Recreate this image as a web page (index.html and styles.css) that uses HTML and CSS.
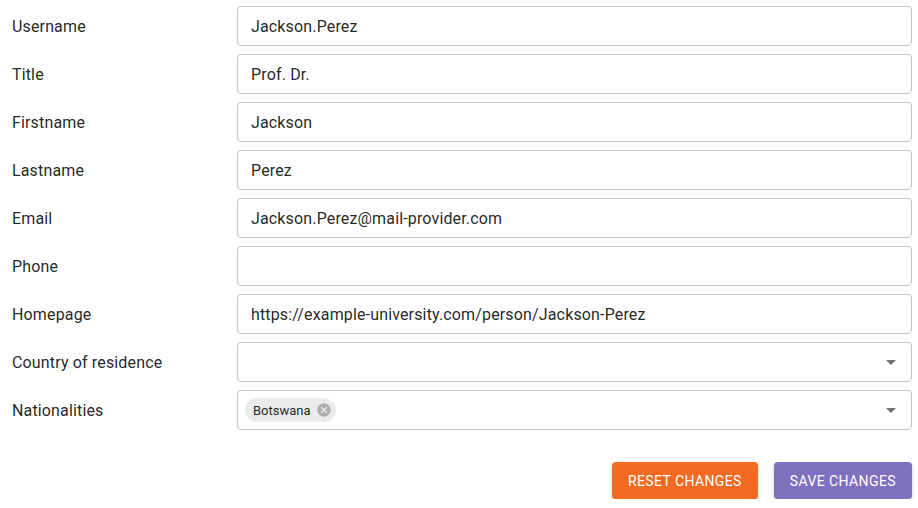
FILE: index.html
```html
<!DOCTYPE html>
<html>
<head>
<meta charset="utf-8">
<link rel="stylesheet" href="styles.css">
</head>
<body>
<form class="form">
  <div class="row"><label class="label">Username</label><div class="field"><span class="value">Jackson.Perez</span></div></div>
  <div class="row"><label class="label">Title</label><div class="field"><span class="value">Prof. Dr.</span></div></div>
  <div class="row"><label class="label">Firstname</label><div class="field"><span class="value">Jackson</span></div></div>
  <div class="row"><label class="label">Lastname</label><div class="field"><span class="value">Perez</span></div></div>
  <div class="row"><label class="label">Email</label><div class="field"><span class="value">Jackson.Perez@mail-provider.com</span></div></div>
  <div class="row"><label class="label">Phone</label><div class="field"><span class="value"></span></div></div>
  <div class="row"><label class="label">Homepage</label><div class="field"><span class="value">https://example-university.com/person/Jackson-Perez</span></div></div>
  <div class="row"><label class="label">Country of residence</label>
    <div class="field select"><span class="value"></span>
      <svg class="arrow" viewBox="0 0 24 24" width="24" height="24"><path d="M7 10l5 5 5-5z" fill="#757575"/></svg>
    </div>
  </div>
  <div class="row"><label class="label">Nationalities</label>
    <div class="field select chips">
      <span class="chip"><span class="chip-label">Botswana</span>
        <svg class="chip-del" viewBox="0 0 24 24" width="16" height="16"><path d="M12 2C6.47 2 2 6.47 2 12s4.47 10 10 10 10-4.47 10-10S17.53 2 12 2zm5 13.59L15.59 17 12 13.41 8.41 17 7 15.59 10.59 12 7 8.41 8.41 7 12 10.59 15.59 7 17 8.41 13.41 12 17 15.59z" fill="rgba(0,0,0,0.26)"/></svg>
      </span>
      <svg class="arrow" viewBox="0 0 24 24" width="24" height="24"><path d="M7 10l5 5 5-5z" fill="#757575"/></svg>
    </div>
  </div>
  <div class="actions">
    <button type="button" class="btn reset">Reset changes</button>
    <button type="button" class="btn save">Save changes</button>
  </div>
</form>
</body>
</html>
```
FILE: styles.css
```css
html, body {
  margin: 0;
  padding: 0;
  background: #fff;
}
body {
  font-family: Roboto, "Liberation Sans", sans-serif;
  color: rgba(0, 0, 0, 0.87);
}
.form {
  padding: 6px 6px 0 12px;
  display: flex;
  flex-direction: column;
  gap: 8px;
}
.row {
  display: flex;
  align-items: center;
  height: 40px;
}
.label {
  width: 225px;
  flex: none;
  font-size: 16px;
  letter-spacing: 0.15px;
  padding-top: 1px;
  color: rgba(0, 0, 0, 0.87);
}
.field {
  flex: 1;
  height: 40px;
  box-sizing: border-box;
  border: 1px solid #c4c4c4;
  border-radius: 4px;
  display: flex;
  align-items: center;
  padding: 1px 13px 0;
  font-size: 16px;
  letter-spacing: 0.15px;
  position: relative;
}
.value {
  color: rgba(0, 0, 0, 0.87);
}
.arrow {
  position: absolute;
  right: 8px;
  top: 7px;
}
.chips {
  padding-left: 7px;
  padding-top: 0;
}
.chip {
  display: inline-flex;
  align-items: center;
  height: 24px;
  border-radius: 12px;
  background: rgba(0, 0, 0, 0.08);
  font-size: 13px;
  letter-spacing: 0;
}
.chip-label {
  padding: 0 7px 0 8px;
}
.chip-del {
  margin: 0 4px 0 -2px;
}
.actions {
  display: flex;
  justify-content: flex-end;
  gap: 16px;
  margin-top: 24px;
}
.btn {
  font-family: Roboto, "Liberation Sans", sans-serif;
  font-size: 14px;
  font-weight: 400;
  letter-spacing: 0.4px;
  text-transform: uppercase;
  color: #fff;
  border: none;
  border-radius: 4px;
  height: 37px;
  padding: 0 16px;
  box-shadow: 0 3px 1px -2px rgba(0,0,0,0.2), 0 2px 2px 0 rgba(0,0,0,0.14), 0 1px 5px 0 rgba(0,0,0,0.12);
}
.reset {
  background: #f26b22;
}
.save {
  background: #8070c0;
}
```
